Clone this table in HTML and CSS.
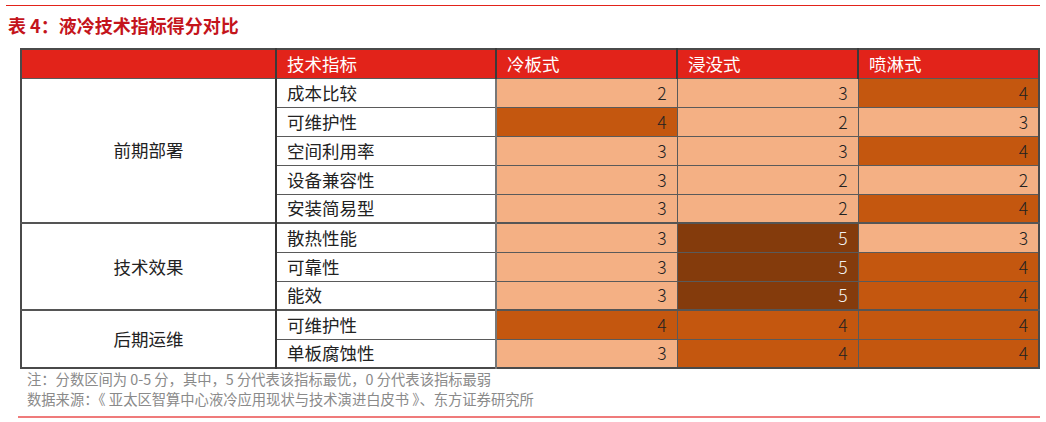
FILE: index.html
```html
<!DOCTYPE html>
<html lang="zh">
<head>
<meta charset="utf-8">
<link rel="stylesheet" href="styles.css">
</head>
<body>
<div class="page">
  <div class="topline"></div>
  <h1 class="title">表 4：液冷技术指标得分对比</h1>
  <table class="score">
    <colgroup>
      <col class="c-group"><col class="c-ind"><col class="c-v"><col class="c-v"><col class="c-v">
    </colgroup>
    <thead>
      <tr><th></th><th>技术指标</th><th>冷板式</th><th>浸没式</th><th>喷淋式</th></tr>
    </thead>
    <tbody>
      <tr><td class="grp" rowspan="5">前期部署</td><td class="ind">成本比较</td><td class="v s2">2</td><td class="v s3">3</td><td class="v s4">4</td></tr>
      <tr><td class="ind">可维护性</td><td class="v s4">4</td><td class="v s2">2</td><td class="v s3">3</td></tr>
      <tr><td class="ind">空间利用率</td><td class="v s3">3</td><td class="v s3">3</td><td class="v s4">4</td></tr>
      <tr><td class="ind">设备兼容性</td><td class="v s3">3</td><td class="v s2">2</td><td class="v s2">2</td></tr>
      <tr><td class="ind">安装简易型</td><td class="v s3">3</td><td class="v s2">2</td><td class="v s4">4</td></tr>
      <tr class="gstart"><td class="grp" rowspan="3">技术效果</td><td class="ind">散热性能</td><td class="v s3">3</td><td class="v s5">5</td><td class="v s3">3</td></tr>
      <tr><td class="ind">可靠性</td><td class="v s3">3</td><td class="v s5">5</td><td class="v s4">4</td></tr>
      <tr><td class="ind">能效</td><td class="v s3">3</td><td class="v s5">5</td><td class="v s4">4</td></tr>
      <tr class="gstart"><td class="grp" rowspan="2">后期运维</td><td class="ind">可维护性</td><td class="v s4">4</td><td class="v s4">4</td><td class="v s4">4</td></tr>
      <tr><td class="ind">单板腐蚀性</td><td class="v s3">3</td><td class="v s4">4</td><td class="v s4">4</td></tr>
    </tbody>
  </table>
  <p class="note">注：分数区间为 0-5 分，其中，5 分代表该指标最优，0 分代表该指标最弱</p>
  <p class="note">数据来源：《 亚太区智算中心液冷应用现状与技术演进白皮书 》、东方证券研究所</p>
  <div class="bottomline"></div>
</div>
</body>
</html>
```

FILE: styles.css
```css
html, body {
  margin: 0;
  padding: 0;
  background: #ffffff;
}

body {
  font-family: "Noto Sans CJK SC", "Noto Sans", "Liberation Sans", sans-serif;
  color: #222222;
}

.page {
  width: 1046px;
  height: 422px;
  padding-top: 5px;
  box-sizing: border-box;
}

.topline {
  height: 1px;
  margin: 0 6px;
  background: #e2231a;
}

.title {
  margin: 6px 0 0 8px;
  font-size: 18px;
  line-height: 26px;
  font-weight: 700;
  color: #c4141b;
  height: 26px;
}

.score {
  margin: 10px 0 0 20px;
  width: 1020px;
  border-collapse: collapse;
  table-layout: fixed;
  border: 2px solid #4a4a4a;
  font-size: 17.5px;
}

.c-group { width: 255px; }
.c-ind { width: 220px; }
.c-v { width: 181px; }

.score th,
.score td {
  border: 1px solid #5a5a5a;
  height: 29px;
  padding: 0 10px;
  line-height: 22px;
  box-sizing: border-box;
}

.score thead th {
  background: #e2231a;
  color: #ffffff;
  font-weight: 400;
  text-align: left;
  border-left: 2px solid #3a3a3a;
}

.score thead th:first-child {
  border-left: 2px solid #4a4a4a;
}

.score td.grp {
  text-align: center;
  background: #ffffff;
  border-right: 2px solid #333333;
}

.score td.ind {
  text-align: left;
  border-right: 2px solid #777777;
}

.score tr.gstart td {
  border-top: 2px solid #555555;
}

.score td.v {
  text-align: right;
  font-weight: 300;
  color: #222222;
}

.s2, .s3 { background: #f4b084; }
.s4 { background: #c4570f; }
.s5 { background: #843b0c; color: #f2f2f2 !important; }

.note {
  margin: 0 0 0 27px;
  font-size: 14.3px;
  line-height: 20px;
  color: #8a8a8a;
}

.bottomline {
  margin: 7px 6px 0 18px;
  height: 2px;
  background: #ef7b7b;
}
```
